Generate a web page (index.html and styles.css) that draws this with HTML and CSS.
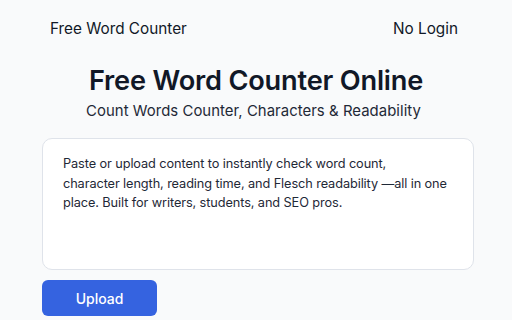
FILE: index.html
```html
<!DOCTYPE html>
<html lang="en">
<head>
    <meta charset="UTF-8">
    <meta name="viewport" content="width=device-width, initial-scale=1.0">
    <title>Free Word Counter Online</title>
    <link rel="stylesheet" href="styles.css">
</head>
<body>
    <header class="topbar">
        <span class="brand">Free Word Counter</span>
        <span class="login">No Login</span>
    </header>

    <section class="hero">
        <h1 class="title">Free Word Counter Online</h1>
        <p class="subtitle">Count Words Counter, Characters &amp; Readability</p>
    </section>

    <main class="main">
        <div class="editor">
            <p>Paste or upload content to instantly check word count,<br>
            character length, reading time, and Flesch readability —all in one<br>
            place. Built for writers, students, and SEO pros.</p>
        </div>

        <button class="button">Upload</button>
    </main>
</body>
</html>
```

FILE: styles.css
```css
* {
    margin: 0;
    padding: 0;
    box-sizing: border-box;
}

body {
    font-family: Inter, 'Noto Sans', Arial, sans-serif;
    background: #f9fafb;
    color: #111827;
    width: 512px;
    height: 320px;
    overflow: hidden;
}

.topbar {
    display: flex;
    justify-content: space-between;
    align-items: center;
    padding: 18px 54px 0 50px;
    height: 38px;
    font-size: 15.3px;
}

.hero {
    display: flex;
    flex-direction: column;
    align-items: center;
}

.title {
    margin-top: 28px;
    font-size: 27.2px;
    font-weight: 600;
    line-height: 30px;
    letter-spacing: -0.2px;
}

.subtitle {
    margin: 5px 5px 0 0;
    font-size: 14.9px;
    line-height: 20px;
    letter-spacing: 0.05px;
    color: #1f2937;
}

.main {
    padding: 17px 38px 0 42px;
    display: flex;
    flex-direction: column;
}

.editor {
    height: 132px;
    background: white;
    border: 1px solid #dfe3ea;
    border-radius: 10px;
    padding: 15px 10px 15px 20px;
}

.editor p {
    font-size: 12.75px;
    line-height: 19.5px;
    letter-spacing: -0.1px;
    color: #1f2937;
    white-space: nowrap;
}

.button {
    align-self: flex-start;
    margin-top: 10px;
    width: 115px;
    height: 36px;
    border: none;
    border-radius: 6px;
    background: #3563e0;
    color: white;
    font-family: inherit;
    font-size: 14px;
    font-weight: 500;
}
```
